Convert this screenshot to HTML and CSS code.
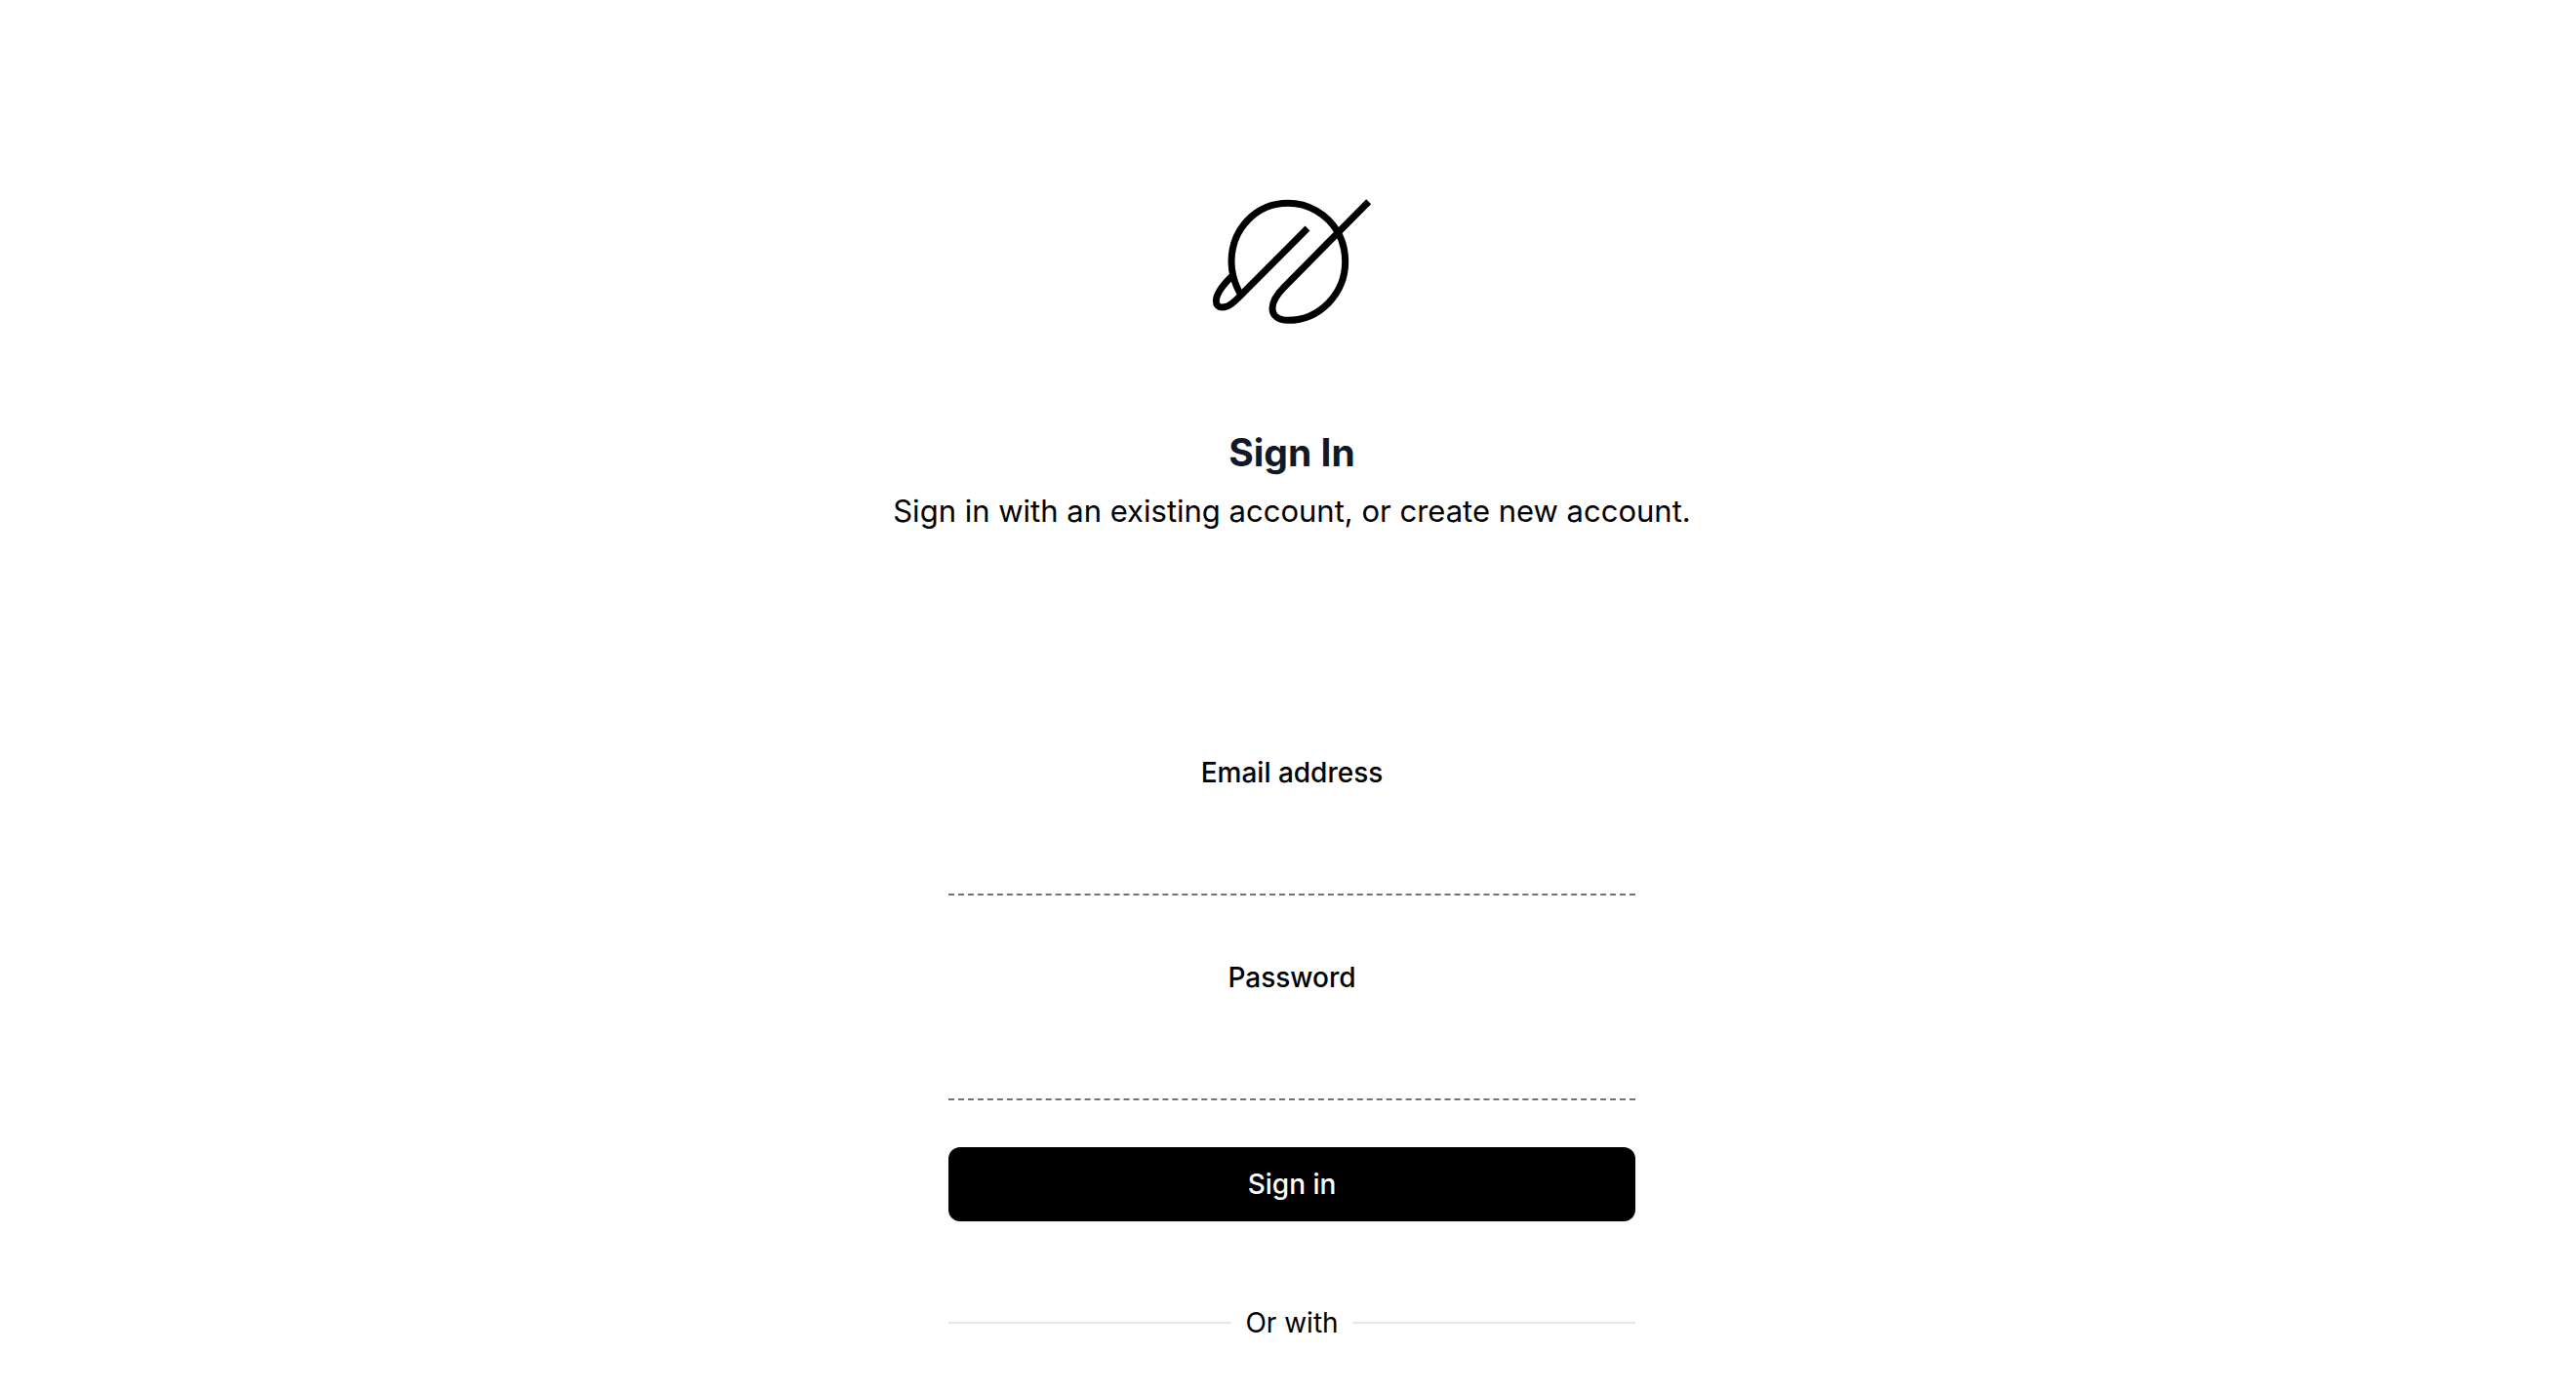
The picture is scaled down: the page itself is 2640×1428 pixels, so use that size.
FILE: index.html
```html
<!DOCTYPE html>
<html lang="en">
<head>
  <meta charset="utf-8">
  <meta name="viewport" content="width=device-width, initial-scale=1">
  <title>Sign In</title>
  <link rel="stylesheet" href="styles.css">
</head>
<body>
  <main class="page">
    <header class="intro">
      <svg class="logo" viewBox="57 60 510 411" fill="none" stroke="currentColor" stroke-width="21" aria-hidden="true">
        <path d="M155 367C137 336 126 301 126 265C126 164 202 85 300 85C363 85 421 119 452 172C468 199 476 231 476 265C476 362 398 445 300 445C270 445 252 431 252 408C252 386 264 367 287 344L548 80"/>
        <path d="M360 162L165 358C140 384 119 405 98 405C86 405 79 397 79 386C79 363 99 337 128 309"/>
      </svg>
      <h1 class="title">Sign In</h1>
      <p class="subtitle">Sign in with an existing account, or create new account.</p>
    </header>
    <form class="form">
      <div class="fields">
        <div class="field">
          <label class="label" for="email">Email address</label>
          <input class="input" id="email" name="email" type="email" autocomplete="email">
        </div>
        <div class="field">
          <label class="label" for="password">Password</label>
          <input class="input" id="password" name="password" type="password" autocomplete="current-password">
        </div>
      </div>
      <button class="submit" type="submit">Sign in</button>
      <div class="divider"><span>Or with</span></div>
    </form>
  </main>
</body>
</html>
```
FILE: styles.css
```css
* {
  box-sizing: border-box;
}

body {
  margin: 0;
  background: #fff;
  color: #000;
  font-family: Inter, "Liberation Sans", sans-serif;
  font-size: 28px;
  line-height: 40px;
}

.page {
  display: flex;
  flex-direction: column;
  align-items: center;
  padding: 200px 0 48px 8px;
}

.intro {
  display: flex;
  flex-direction: column;
  align-items: center;
  text-align: center;
}

.logo {
  display: block;
  width: 170px;
  height: 137px;
}

.title {
  margin: 103px 0 0;
  color: #111827;
  font-size: 39px;
  font-weight: 700;
  line-height: 48px;
}

.subtitle {
  margin: 12px 0 0;
  font-size: 31px;
  line-height: 48px;
}

.form {
  display: flex;
  flex-direction: column;
  width: 100%;
  max-width: 704px;
  margin-top: 224px;
}

.fields {
  display: flex;
  flex-direction: column;
  gap: 64px;
}

.field {
  display: flex;
  flex-direction: column;
  gap: 8px;
}

.label {
  font-weight: 500;
  text-align: center;
}

.input {
  width: 100%;
  height: 98px;
  padding: 12px;
  border: 0;
  border-bottom: 2px dashed #6b7280;
  border-radius: 0;
  background: transparent;
  font: inherit;
  text-align: center;
  outline: 0;
}

.submit {
  height: 76px;
  margin-top: 48px;
  border: 0;
  border-radius: 12px;
  background: #000;
  box-shadow: 0 2px 4px rgb(0 0 0 / 5%);
  color: #fff;
  font: inherit;
  font-weight: 500;
}

.divider {
  display: flex;
  align-items: center;
  gap: 14px;
  margin-top: 84px;
}

.divider::before,
.divider::after {
  content: "";
  flex: 1;
  height: 2px;
  background: #e5e7eb;
}
```
